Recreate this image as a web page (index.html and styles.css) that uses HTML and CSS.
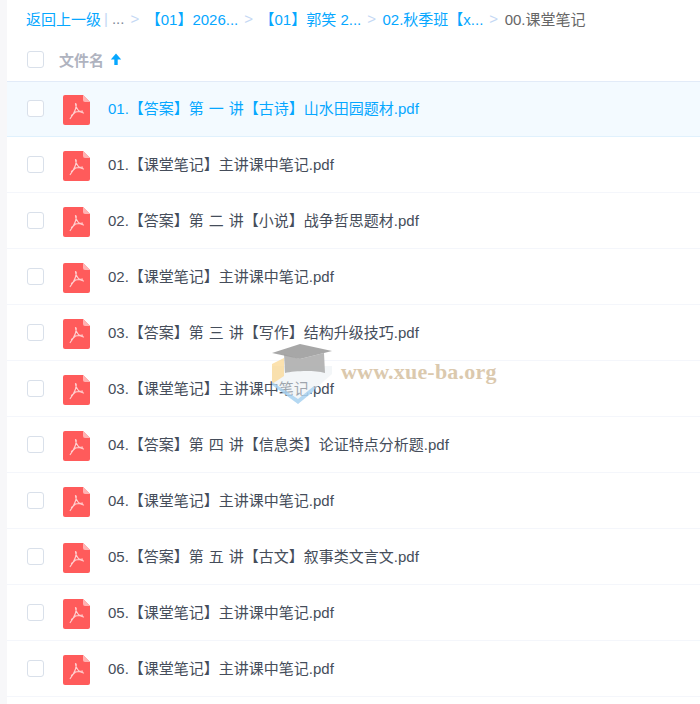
FILE: index.html
```html
<!DOCTYPE html>
<html lang="zh-CN">
<head>
  <meta charset="UTF-8">
  <title>文件列表</title>
  <link rel="stylesheet" href="styles.css">
</head>
<body>
  <svg class="icon-defs" width="0" height="0">
    <symbol id="pdf" viewBox="0 0 27 30">
      <path d="M2 0H20L27 7V28a2 2 0 0 1-2 2H2a2 2 0 0 1-2-2V2a2 2 0 0 1 2-2z" fill="#ff5b5b"/>
      <path d="M20 0L27 7H22a2 2 0 0 1-2-2z" fill="#ffb3b3"/>
      <path d="M12.500 8.500c.2 3 1.800 6 4 8l4 1.500M13.200 9c.3 3.500-1.500 7.500-3.200 10.500l-2.800 4M8.500 20.500l4-3.500 7-.8" fill="none" stroke="#ffcfcf" stroke-width="1.200" stroke-linecap="round"/>
    </symbol>
  </svg>

  <main class="panel">
    <nav class="crumbs">
      <a href="#">返回上一级</a>
      <span class="bar">|</span>
      <span class="dots">...</span>
      <span class="sep">&gt;</span>
      <a href="#">【01】2026...</a>
      <span class="sep">&gt;</span>
      <a href="#">【01】郭笑 2...</a>
      <span class="sep">&gt;</span>
      <a href="#">02.秋季班【x...</a>
      <span class="sep">&gt;</span>
      <span class="current">00.课堂笔记</span>
    </nav>

    <div class="list-head">
      <span class="check"></span>
      <span class="head-name">文件名</span>
      <svg class="sort-arrow" width="12" height="12" viewBox="0 0 12 12"><path d="M6 .5L.8 6.500H4.300V12H7.700V6.500H11.200z" fill="#06a7ff"/></svg>
    </div>

    <ul class="files">
      <li class="file active"><span class="check"></span><svg class="pdf-icon"><use href="#pdf"/></svg><span class="name">01.【答案】第 一 讲【古诗】山水田园题材.pdf</span></li>
      <li class="file"><span class="check"></span><svg class="pdf-icon"><use href="#pdf"/></svg><span class="name">01.【课堂笔记】主讲课中笔记.pdf</span></li>
      <li class="file"><span class="check"></span><svg class="pdf-icon"><use href="#pdf"/></svg><span class="name">02.【答案】第 二 讲【小说】战争哲思题材.pdf</span></li>
      <li class="file"><span class="check"></span><svg class="pdf-icon"><use href="#pdf"/></svg><span class="name">02.【课堂笔记】主讲课中笔记.pdf</span></li>
      <li class="file"><span class="check"></span><svg class="pdf-icon"><use href="#pdf"/></svg><span class="name">03.【答案】第 三 讲【写作】结构升级技巧.pdf</span></li>
      <li class="file"><span class="check"></span><svg class="pdf-icon"><use href="#pdf"/></svg><span class="name">03.【课堂笔记】主讲课中笔记.pdf</span></li>
      <li class="file"><span class="check"></span><svg class="pdf-icon"><use href="#pdf"/></svg><span class="name">04.【答案】第 四 讲【信息类】论证特点分析题.pdf</span></li>
      <li class="file"><span class="check"></span><svg class="pdf-icon"><use href="#pdf"/></svg><span class="name">04.【课堂笔记】主讲课中笔记.pdf</span></li>
      <li class="file"><span class="check"></span><svg class="pdf-icon"><use href="#pdf"/></svg><span class="name">05.【答案】第 五 讲【古文】叙事类文言文.pdf</span></li>
      <li class="file"><span class="check"></span><svg class="pdf-icon"><use href="#pdf"/></svg><span class="name">05.【课堂笔记】主讲课中笔记.pdf</span></li>
      <li class="file"><span class="check"></span><svg class="pdf-icon"><use href="#pdf"/></svg><span class="name">06.【课堂笔记】主讲课中笔记.pdf</span></li>
    </ul>
  </main>

  <!-- site watermark, sits over the list -->
  <div class="watermark">
    <svg width="66" height="62" viewBox="0 0 66 62">
      <path d="M2 22V40L28 60L62 30V22z" fill="#e9eef2" opacity=".55"/>
      <path d="M2 20L14 14V32L2 40z" fill="#fbd894" opacity=".75"/>
      <path d="M2 38L28 55L44 42V47L28 60L2 41z" fill="#9fcdf0" opacity=".75"/>
      <path d="M14 10L30 15L54 9L55 29C44 26 24 27 15 29z" fill="#b0b0b0" opacity=".92"/>
      <path d="M2 9L30 0L62 7L30 15z" fill="#a0a0a0" opacity=".92"/>
    </svg>
    <span class="wm-text">www.xue-ba.org</span>
  </div>
</body>
</html>
```

FILE: styles.css
```css
* {
  box-sizing: border-box;
}

html, body {
  margin: 0;
  height: 704px;
  overflow: hidden;
}

body {
  position: relative;
  background-color: #f7f7f9;
  padding-left: 7px;
  font-family: "Liberation Sans", "Noto Sans CJK SC", sans-serif;
  font-size: 15px;
  color: #454d5a;
}

.icon-defs {
  display: none;
}

.panel {
  background-color: #fff;
  height: 704px;
}

/* Breadcrumb */
.crumbs {
  display: flex;
  align-items: center;
  height: 40px;
  padding: 0 0 3px 19px;
  white-space: nowrap;
}

.crumbs a {
  color: #06a7ff;
  text-decoration: none;
}

.crumbs .bar {
  color: #c4d8f4;
  margin: 0 4px 0 3px;
}

.crumbs .dots {
  color: #818999;
}

.crumbs .sep {
  color: #c4d8f4;
  margin: 0 6.5px 0 6px;
}

.crumbs .current {
  color: #666;
}

/* Table head */
.list-head {
  display: flex;
  align-items: center;
  height: 42px;
  padding: 0 0 3px 20px;
  border-bottom: 1px solid #e2ebf8;
}

.head-name {
  margin-left: 15px;
  font-weight: bold;
  color: #afb3bf;
}

.sort-arrow {
  margin-left: 6px;
}

.check {
  display: block;
  width: 17px;
  height: 17px;
  flex: none;
  background-color: #fff;
  border: 1px solid #d9e0ea;
  border-radius: 3px;
}

/* Rows */
.files {
  list-style: none;
  margin: 0;
  padding: 0;
}

.file {
  display: flex;
  align-items: center;
  height: 56px;
  padding-left: 20px;
  border-bottom: 1px solid #f4f6fb;
}

.file.active {
  height: 55px;
  background-color: #f3faff;
  border-bottom-color: #e0f1fd;
  color: #06a7ff;
}

.file.active .check {
  margin-bottom: 1px;
}

.pdf-icon {
  width: 27px;
  height: 30px;
  flex: none;
  margin: 2px 0 0 19px;
}

.name {
  margin: 0 0 3px 18px;
  white-space: nowrap;
  word-spacing: .8px;
}

/* Watermark */
.watermark {
  position: absolute;
  left: 270px;
  top: 344px;
  display: flex;
  align-items: flex-start;
}

.wm-text {
  margin: 15px 0 0 5px;
  font-family: "Liberation Serif", serif;
  font-size: 22px;
  font-weight: bold;
  letter-spacing: .2px;
  color: #dbc9ae;
}
```
